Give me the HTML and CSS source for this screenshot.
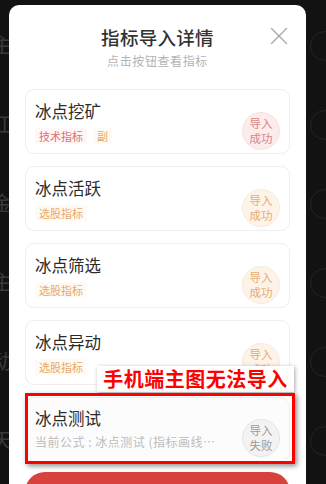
FILE: index.html
```html
<!DOCTYPE html>
<html lang="zh">
<head>
<meta charset="utf-8">
<link rel="stylesheet" href="styles.css">
</head>
<body>
<div class="bg-page">
  <div class="bg-row"><span class="bg-char">主</span><span class="bg-ring"></span></div>
  <div class="bg-row"><span class="bg-char">江</span><span class="bg-ring"></span></div>
  <div class="bg-row"><span class="bg-char">金</span><span class="bg-ring"></span></div>
  <div class="bg-row"><span class="bg-char">主</span><span class="bg-ring"></span></div>
  <div class="bg-row"><span class="bg-char">动</span><span class="bg-ring"></span></div>
  <div class="bg-row"><span class="bg-char">天</span><span class="bg-ring"></span></div>
</div>

<div class="modal">
  <div class="modal-head">
    <div class="title">指标导入详情</div>
    <div class="subtitle">点击按钮查看指标</div>
    <svg class="close" viewBox="0 0 18 18" width="18" height="18"><path d="M1.5 1.5 L16.5 16.5 M16.5 1.5 L1.5 16.5" stroke="#a8a8a8" stroke-width="1.4" fill="none" stroke-linecap="round"/></svg>
  </div>

  <div class="list">
    <div class="card">
      <div class="info">
        <div class="name">冰点挖矿</div>
        <div class="tags"><span class="tag tag-red">技术指标</span><span class="tag tag-orange">副</span></div>
      </div>
      <div class="badge badge-red">导入<br>成功</div>
    </div>
    <div class="card">
      <div class="info">
        <div class="name">冰点活跃</div>
        <div class="tags"><span class="tag tag-orange">选股指标</span></div>
      </div>
      <div class="badge badge-orange">导入<br>成功</div>
    </div>
    <div class="card">
      <div class="info">
        <div class="name">冰点筛选</div>
        <div class="tags"><span class="tag tag-orange">选股指标</span></div>
      </div>
      <div class="badge badge-orange">导入<br>成功</div>
    </div>
    <div class="card">
      <div class="info">
        <div class="name">冰点异动</div>
        <div class="tags"><span class="tag tag-orange">选股指标</span></div>
      </div>
      <div class="badge badge-orange">导入<br>成功</div>
    </div>
    <div class="card card-fail">
      <div class="info">
        <div class="name">冰点测试</div>
        <div class="formula">当前公式 : 冰点测试 (指标画线…</div>
      </div>
      <div class="badge badge-gray">导入<br>失败</div>
    </div>
  </div>

  <div class="primary-btn"></div>

  <div class="note-label">手机端主图无法导入</div>
  <div class="note-box"></div>
</div>
</body>
</html>
```

FILE: styles.css
```css
* { box-sizing: border-box; }
html, body {
  margin: 0;
  padding: 0;
  width: 326px;
  height: 484px;
  overflow: hidden;
  background: #121212;
  font-family: "Noto Sans CJK SC", "Noto Sans", sans-serif;
}
.bg-page {
  display: flex;
  flex-direction: column;
  padding-top: 31px;
}
.bg-row {
  height: 79px;
  display: flex;
  justify-content: space-between;
  align-items: flex-start;
}
.bg-char {
  font-size: 20px;
  line-height: 28px;
  color: #3a3a3a;
  margin-left: -8px;
}
.bg-ring {
  width: 30px;
  height: 30px;
  border: 1px solid #242424;
  border-radius: 50%;
  margin-right: -14px;
}
.modal {
  position: fixed;
  left: 9px;
  top: 5px;
  width: 297px;
  height: 520px;
  background: #ffffff;
  border-radius: 10px;
  padding: 0 16px;
}
.modal-head {
  position: relative;
  padding-top: 20px;
  text-align: center;
}
.title {
  font-size: 18.5px;
  line-height: 25px;
  font-weight: 500;
  color: #333333;
  letter-spacing: 0.3px;
}
.subtitle {
  margin-top: 3px;
  font-size: 12px;
  line-height: 16px;
  color: #b3b3b3;
  letter-spacing: 0.6px;
}
.close {
  position: absolute;
  right: 2px;
  top: 22px;
}
.list {
  margin-top: 20px;
  display: flex;
  flex-direction: column;
  gap: 12px;
}
.card {
  height: 65px;
  border: 1px solid #eeeeee;
  border-radius: 9px;
  padding: 10px 9px 0 9px;
  display: flex;
  justify-content: space-between;
  align-items: flex-start;
  background: #fff;
}
.name {
  font-size: 16.5px;
  line-height: 22px;
  color: #2b2b2b;
  font-weight: 400;
}
.tags {
  margin-top: 6px;
  display: flex;
  gap: 6px;
}
.tag {
  font-size: 11px;
  line-height: 16px;
  padding: 0 4px;
  border-radius: 2px;
}
.tag-red { color: #de6f6f; background: #fef7f7; }
.tag-orange { color: #e9a868; background: #fefaf5; }
.badge {
  width: 38px;
  height: 38px;
  border-radius: 50%;
  margin-top: 12px;
  font-size: 11.5px;
  line-height: 15px;
  display: flex;
  align-items: center;
  justify-content: center;
  text-align: center;
}
.badge-red { background: #fcecec; color: #d98585; border: 1px solid #f7e2e2; }
.badge-orange { background: #fdf3e8; color: #e6ac72; border: 1px solid #f8eadb; }
.badge-gray { background: #f3f3f3; color: #9a9a9a; border: 1px solid #e4e4e4; }
.card-fail {
  padding-top: 9px;
  background: #fcfcfc;
}
.card-fail .badge { margin-top: 12px; }
.formula {
  margin-top: 5px;
  font-size: 12px;
  line-height: 16px;
  color: #bdbdbd;
  white-space: nowrap;
  letter-spacing: 0.5px;
}
.primary-btn {
  margin-top: 10px;
  height: 40px;
  border-radius: 20px;
  background: #d8423c;
}
.note-label {
  position: absolute;
  left: 88px;
  top: 361px;
  width: 197px;
  height: 26px;
  background: #ffffff;
  box-shadow: 1px 1px 4px rgba(0, 0, 0, 0.35);
  color: #ff0000;
  font-size: 20px;
  line-height: 26px;
  font-weight: 700;
  text-align: center;
  letter-spacing: 0.5px;
  white-space: nowrap;
}
.note-box {
  position: absolute;
  left: 16px;
  top: 388px;
  width: 270px;
  height: 71px;
  border: 3px solid #ff0000;
  box-shadow: 2px 2px 5px rgba(0, 0, 0, 0.45);
}
```
